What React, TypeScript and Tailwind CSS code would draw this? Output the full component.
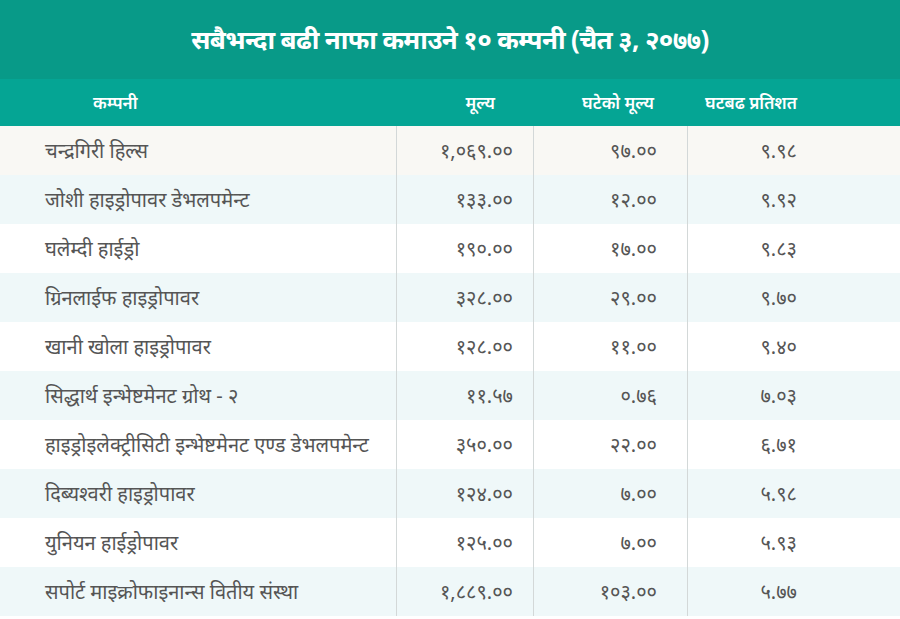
const rows = [
  { name: "चन्द्रगिरी हिल्स", price: "१,०६९.००", change: "९७.००", pct: "९.९८" },
  { name: "जोशी हाइड्रोपावर डेभलपमेन्ट", price: "१३३.००", change: "१२.००", pct: "९.९२" },
  { name: "घलेम्दी हाईड्रो", price: "१९०.००", change: "१७.००", pct: "९.८३" },
  { name: "ग्रिनलाईफ हाइड्रोपावर", price: "३२८.००", change: "२९.००", pct: "९.७०" },
  { name: "खानी खोला हाइड्रोपावर", price: "१२८.००", change: "११.००", pct: "९.४०" },
  { name: "सिद्धार्थ इन्भेष्टमेनट ग्रोथ - २", price: "११.५७", change: "०.७६", pct: "७.०३" },
  { name: "हाइड्रोइलेक्ट्रीसिटी इन्भेष्टमेनट एण्ड डेभलपमेन्ट", price: "३५०.००", change: "२२.००", pct: "६.७१" },
  { name: "दिब्यश्वरी हाइड्रोपावर", price: "१२४.००", change: "७.००", pct: "५.९८" },
  { name: "युनियन हाईड्रोपावर", price: "१२५.००", change: "७.००", pct: "५.९३" },
  { name: "सपोर्ट माइक्रोफाइनान्स वितीय संस्था", price: "१,८८९.००", change: "१०३.००", pct: "५.७७" },
];

const rowBg = (i: number) =>
  i === 0 ? "bg-[#f9f8f4]" : i % 2 === 1 ? "bg-[#eff8f9]" : "bg-white";

export default function App() {
  return (
    <div className="w-[900px] h-[619px] overflow-hidden bg-white font-['Noto_Sans',sans-serif] text-[#555]">
      {/* Title */}
      <div className="h-[79px] bg-[#089a88] flex items-center justify-center">
        <h1 className="text-white text-[26px] font-bold tracking-tight">
          सबैभन्दा बढी नाफा कमाउने १० कम्पनी (चैत ३, २०७७)
        </h1>
      </div>

      {/* Header */}
      <div className="h-[47px] bg-[#05a594] grid grid-cols-[396px_137px_154px_1fr] items-center text-white text-[17px] font-semibold">
        <div className="pl-[93px]">कम्पनी</div>
        <div className="text-right pr-[38px]">मूल्य</div>
        <div className="text-right pr-[33px]">घटेको मूल्य</div>
        <div className="pl-[18px]">घटबढ प्रतिशत</div>
      </div>

      {/* Rows */}
      {rows.map((r, i) => (
        <div
          key={i}
          className={`h-[49px] grid grid-cols-[396px_137px_154px_1fr] text-[20px] ${rowBg(i)}`}
        >
          <div className="pl-[45px] flex items-center whitespace-nowrap">{r.name}</div>
          <div className="border-l border-[#d3d8d8] flex items-center justify-end pr-[20px]">{r.price}</div>
          <div className="border-l border-[#d3d8d8] flex items-center justify-end pr-[30px]">{r.change}</div>
          <div className="border-l border-[#d3d8d8] flex items-center justify-end pr-[103px]">{r.pct}</div>
        </div>
      ))}
    </div>
  );
}
